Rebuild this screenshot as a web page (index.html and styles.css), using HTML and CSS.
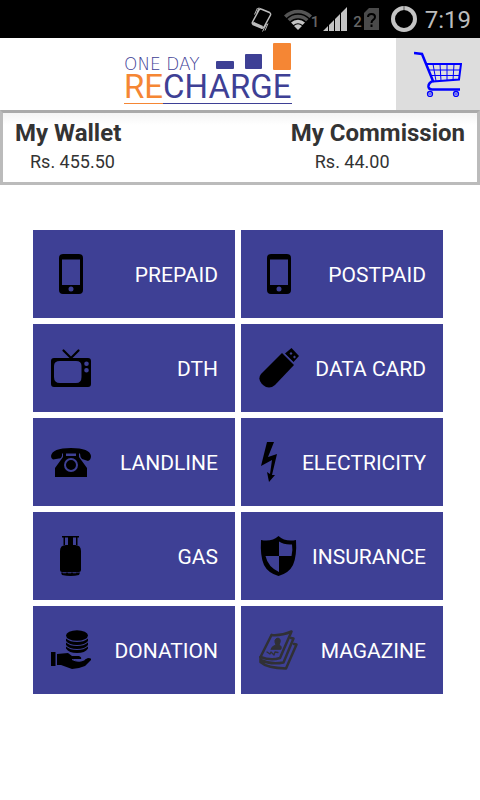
FILE: index.html
```html
<!DOCTYPE html>
<html lang="en">
<head>
<meta charset="utf-8">
<meta name="viewport" content="width=device-width, initial-scale=1">
<title>One Day Recharge</title>
<link rel="stylesheet" href="styles.css">
</head>
<body>
<div class="status">
  <svg class="s-vibrate" width="22" height="28" viewBox="0 0 22 28" fill="none" stroke="#bcbcbc">
    <path d="M10 4L18.500 7.500Q20 8.500 19.500 10L13 22Q12 23.500 10.500 23L2 19.500Q0.800 18.500 1.500 17L8 5Q9 3.500 10 4Z" stroke-width="1.500"/>
    <path d="M2 18L11.500 22.200" stroke-width="2.800"/>
    <path d="M3.500 9.500L6.500 3M6 8L8 2.500M11.500 26.500L15.500 19M14 25.500L17 18.500" stroke-width="1"/>
  </svg>
  <svg class="s-wifi" width="30" height="22" viewBox="0 0 30 22">
    <path d="M1 7.500A20 20 0 0 1 29 7.500L26.500 10A16.500 16.500 0 0 0 3.500 10ZM4.500 11A15 15 0 0 1 25.500 11L23 13.500A11.500 11.500 0 0 0 7 13.500Z" fill="#555"/>
    <path d="M8 14.500A10 10 0 0 1 22 14.500L19.500 17A6.500 6.500 0 0 0 10.500 17ZM11 18A5.500 5.500 0 0 1 19 18L15 22Z" fill="#c4c4c4"/>
  </svg>
  <span class="sim-number s-one">1</span>
  <svg class="s-signal" width="24" height="24" viewBox="0 0 24 24" fill="#c4c4c4">
    <path d="M0 24L5 19V24ZM6 24V18L11 13V24ZM12 24V12L17 7V24ZM18 24V6L24 0V24Z"/>
  </svg>
  <span class="sim-number s-two">2</span>
  <svg class="s-sim" width="15" height="22" viewBox="0 0 15 22">
    <path d="M5 0H15V22H0V5Z" fill="#4a4a4a"/>
    <path d="M4 9Q4 6 7.500 6Q11 6 11 9Q11 11 9 12Q7.500 13 7.500 15M7.500 16.500V19" fill="none" stroke="#000" stroke-width="2"/>
  </svg>
  <svg class="s-battery" width="26" height="26" viewBox="0 0 26 26">
    <circle cx="13" cy="13" r="11" fill="none" stroke="#c4c4c4" stroke-width="4"/>
    <path d="M13 0V4" stroke="#555" stroke-width="1"/>
  </svg>
  <time class="clock">7:19</time>
</div>
<header class="header">
  <div class="logo">
    <div class="logo-top">
      <span class="logo-name">ONE DAY</span>
      <svg width="75" height="28" viewBox="0 0 75 28">
        <rect x="0" y="18" width="18" height="8" rx="1" fill="#3e4095"/>
        <rect x="29" y="11" width="17" height="15" rx="1" fill="#3e4095"/>
        <rect x="57" y="0" width="18" height="27" rx="1" fill="#f58634"/>
      </svg>
    </div>
    <div class="logo-word"><span class="logo-re">RE</span><span class="logo-charge">CHARGE</span></div>
  </div>
  <button class="cart" type="button" aria-label="Cart">
    <svg width="48" height="46" viewBox="0 0 48 46" fill="none" stroke="#00f">
      <path d="M0 2L8 3L19 30Q14 32 14.500 36Q15 38.500 18 38.500H46" stroke-width="2.500"/>
      <path d="M12.500 13H47L45 28.500L19 30.500" stroke-width="2"/>
      <path d="M19 13L22 30M26 13L27 30M33 13V30M40 13L39 29M14 19H46.500M16.500 24.500H46" stroke-width="1"/>
      <circle cx="16" cy="43" r="2.500" stroke-width="1.300"/><circle cx="42" cy="43" r="2.500" stroke-width="1.300"/>
      <path d="M14.500 43H17.500M40.500 43H43.500" stroke-width="1"/>
    </svg>
  </button>
</header>
<section class="balances">
  <div class="balance">
    <h2>My Wallet</h2>
    <p class="wallet-amount">Rs. 455.50</p>
  </div>
  <div class="balance">
    <h2>My Commission</h2>
    <p class="commission-amount">Rs. 44.00</p>
  </div>
</section>
<main class="services">
  <button class="tile" type="button">
    <svg class="icon" viewBox="0 0 40 40"><path fill-rule="evenodd" d="M12 0H28Q32 0 32 4V36Q32 40 28 40H12Q8 40 8 36V4Q8 0 12 0ZM11 5.500V31H29V5.500ZM20 32.500A2.500 2.500 0 1 0 20 37.500A2.500 2.500 0 1 0 20 32.500Z"/></svg>
    <span>PREPAID</span>
  </button>
  <button class="tile" type="button">
    <svg class="icon" viewBox="0 0 40 40"><path fill-rule="evenodd" d="M12 0H28Q32 0 32 4V36Q32 40 28 40H12Q8 40 8 36V4Q8 0 12 0ZM11 5.500V31H29V5.500ZM20 32.500A2.500 2.500 0 1 0 20 37.500A2.500 2.500 0 1 0 20 32.500Z"/></svg>
    <span>POSTPAID</span>
  </button>
  <button class="tile" type="button">
    <svg class="icon" viewBox="0 0 40 40">
      <path fill-rule="evenodd" d="M3 10H37Q40 10 40 13V36Q40 39 37 39H3Q0 39 0 36V13Q0 10 3 10ZM9 13Q3 13 3 18V29Q3 35 9 35H25Q30.500 35 30.500 29V18Q30.500 13 25 13ZM35.500 13.500A2.300 2.300 0 1 0 35.500 18.100A2.300 2.300 0 1 0 35.500 13.500ZM35.500 20A2.300 2.300 0 1 0 35.500 24.600A2.300 2.300 0 1 0 35.500 20Z"/>
      <path d="M12.500 2.500L20 10L27.500 2.500" fill="none" stroke="#000" stroke-width="2.200" stroke-linecap="round"/>
    </svg>
    <span>DTH</span>
  </button>
  <button class="tile" type="button">
    <svg class="icon" viewBox="0 0 40 40">
      <path d="M23 5L35 17L16 37Q10 42 4 37Q-2 31 2 26Z"/>
      <path fill-rule="evenodd" d="M32.500 0L40 8L34.500 14L26 5.500ZM32 4L30.500 5.500L32 7L33.500 5.500ZM35.500 7.500L34 9L35.500 10.500L37 9Z"/>
      <path d="M25 5L35 15" stroke="#3e4095" stroke-width=".7"/>
    </svg>
    <span>DATA CARD</span>
  </button>
  <button class="tile" type="button">
    <svg class="icon" viewBox="0 0 40 40">
      <path d="M0 14Q1 6 20 6Q39 6 40 14Q40 18 37 19L31 17Q29 15 29 11.500H11V14Q10 17 8 16.500L2 17.500Q0 17 0 14Z"/>
      <path d="M12 11H15V14H25V11H28V15L36 26V35H4V26L12 15Z"/>
      <circle cx="20" cy="23" r="6" fill="none" stroke="#3e4095" stroke-width="2"/>
    </svg>
    <span>LANDLINE</span>
  </button>
  <button class="tile" type="button">
    <svg class="icon" viewBox="0 0 40 40"><path d="M8 0H15L9 15L18 12L13 33H16L10 40L8 30L11 32L13 18L2 24Z"/></svg>
    <span>ELECTRICITY</span>
  </button>
  <button class="tile" type="button">
    <svg class="icon" viewBox="0 0 40 40">
      <path d="M11 0H28V1.500H26.500V9H25V1.500H22V9H17V1.500H14V9H12.500V1.500H11Z"/>
      <path d="M9 15Q9 9 15 9H24Q30 9 30 15V34Q30 36 28 36H11Q9 36 9 34ZM10 36.500L29 36.500L28 39Q20 41 11 39Z"/>
      <path d="M12 36.800H27" stroke="#3e4095" stroke-width=".7" stroke-dasharray="3 2"/>
    </svg>
    <span>GAS</span>
  </button>
  <button class="tile" type="button">
    <svg class="icon" viewBox="0 0 40 40"><path fill-rule="evenodd" d="M19.500 0Q26 6 37 4Q38 20 34 29Q30 37 19.500 40Q9 37 5 29Q1 20 2 4Q13 6 19.500 0ZM20 5.500V20H32.500Q34 14 33 8.500Q25 9 20 5.500ZM6.500 20H20V36Q9 31 6.500 20Z"/></svg>
    <span>INSURANCE</span>
  </button>
  <button class="tile" type="button">
    <svg class="icon" viewBox="0 0 40 40">
      <ellipse cx="26" cy="5.500" rx="11" ry="5.300"/>
      <path d="M15 8.500Q19 12 26 12Q33 12 37 8.500V11Q34 15 26 15Q18 15 15 11ZM15 12.500Q19 16 26 16Q33 16 37 12.500V15Q34 19 26 19Q18 19 15 15ZM15 16.500Q19 20 26 20Q33 20 37 16.500V18.500Q34 23 26 23Q18 23 15 18.500Z"/>
      <path d="M0 22H4.500V36H0ZM6 24L17 23L21 26H28Q31 27 30 29H21Q27 33 33 30L37 28Q41 28 40 30L34 36Q27 39 21 39L10 35H6Z"/>
      <path d="M21 29.500Q28 33 34 29.500" fill="none" stroke="#3e4095" stroke-width="1"/>
    </svg>
    <span>DONATION</span>
  </button>
  <button class="tile" type="button">
    <svg class="icon" viewBox="0 0 40 40" fill="none" stroke="#303035" stroke-width="2.500" stroke-linejoin="round" stroke-linecap="round">
      <path d="M12.500 5Q22 6 32.500 1.500L21 28Q12 31 1.500 27L12.500 5"/>
      <path d="M32 8L34.500 8.500L24.500 32.500Q12 35 1.500 30V27M35 14L37.500 14.500L27 38.500Q8 38 1.500 32V28"/>
      <path d="M12 19Q13 16 17 15Q14 9 19 8Q23 9 20 15Q23 16 22 19Z" fill="#303035" stroke-width="1"/>
      <path d="M8 22L11 24L12 22L15 25L16 22L19 22.500" stroke-width="1.300"/>
    </svg>
    <span>MAGAZINE</span>
  </button>
</main>
</body>
</html>
```
FILE: styles.css
```css
* {
  box-sizing: border-box;
}

body {
  margin: 0;
  background: #fff;
  color: #333;
  font-family: Roboto, "Liberation Sans", sans-serif;
}

button {
  border: 0;
  padding: 0;
  font: inherit;
  cursor: pointer;
}

h2,
p {
  margin: 0;
}

.status {
  display: flex;
  justify-content: flex-end;
  align-items: center;
  height: 38px;
  padding-right: 9px;
  background: #000;
}

.s-vibrate {
  margin-right: 10px;
}

.s-wifi {
  margin-right: -2px;
}

.sim-number {
  color: #666;
  font-size: 15px;
  font-weight: 500;
  line-height: 16px;
  padding-top: 6px;
}

.s-one {
  margin-right: 4px;
}

.s-two {
  margin: 0 2px 0 6px;
}

.s-battery {
  margin: 0 8px 0 12px;
}

.clock {
  color: #bcbcbc;
  font-size: 24px;
  line-height: 36px;
  padding-top: 2px;
}

.header {
  display: grid;
  grid-template-columns: 1fr 84px;
  height: 72px;
}

.logo {
  justify-self: end;
  width: 167px;
  margin-right: 105px;
  padding-top: 5px;
}

.logo-top {
  display: flex;
  justify-content: space-between;
  align-items: flex-end;
  height: 28px;
}

.logo-name {
  color: #3e4095;
  font-family: "DejaVu Sans", sans-serif;
  font-size: 17px;
  font-weight: 200;
  line-height: 14px;
  white-space: nowrap;
}

.logo-word {
  display: flex;
  font-size: 33px;
  line-height: 32px;
}

.logo-re {
  color: #f58634;
  border-bottom: 1px solid #f58634;
}

.logo-charge {
  flex: 1;
  color: #3e4095;
  border-bottom: 1px solid #3e4095;
}

.cart {
  display: flex;
  justify-content: center;
  align-items: center;
  background: #ddd;
}

.balances {
  display: flex;
  justify-content: space-between;
  border: 3px solid #bbb;
  border-top-color: #aaa;
  padding: 6px 12px;
  background: linear-gradient(#f4f4f4, #fff 12px);
}

.balance h2 {
  font-size: 24px;
  font-weight: 700;
  line-height: 28px;
}

.balance p {
  font-size: 18px;
  line-height: 29px;
}

.wallet-amount {
  padding-left: 15px;
}

.commission-amount {
  padding-left: 24px;
}

.services {
  display: grid;
  grid-template-columns: 1fr 1fr;
  gap: 6px;
  padding: 45px 37px 45px 33px;
}

.tile {
  display: flex;
  justify-content: space-between;
  align-items: center;
  height: 88px;
  padding: 0 17px 0 18px;
  background: #3e4095;
  color: #fff;
  font-size: 21px;
  line-height: 24px;
  white-space: nowrap;
}

.tile span {
  padding-top: 2px;
}

.icon {
  flex: none;
  width: 40px;
  height: 40px;
}
```
